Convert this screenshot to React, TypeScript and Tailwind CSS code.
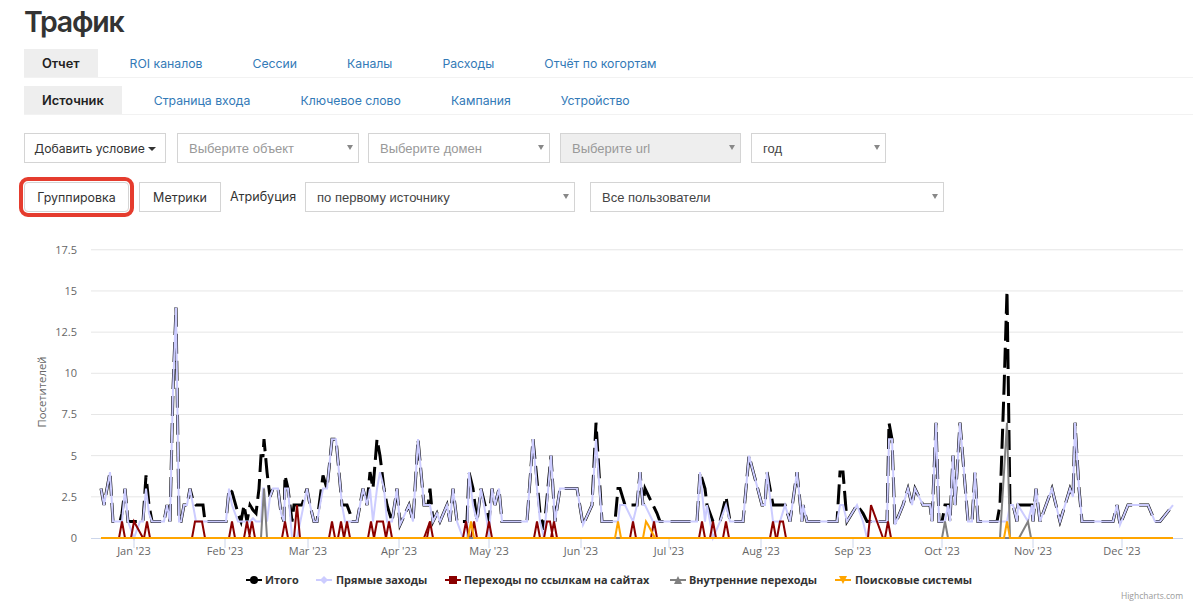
import type { ReactNode } from "react";

const UI_FONT = "font-['Inter','Liberation_Sans',sans-serif]";
const SELECT_FONT = "font-['Liberation_Sans',Arial,sans-serif]";

// [x px, direct, total] - total falls back to direct
type P = [number, number, number?];

const traffic: P[] = [
  [101, 3], [104, 2], [107, 3], [110, 4], [113, 1], [120, 1], [122, 1, 1.5], [125, 3], [128, 1], [134, 0, 1], [140, 1],
  [143, 1], [146, 3, 3.8], [149, 1.5, 2], [152, 1], [164, 1], [167, 2], [170, 1], [173, 9], [176, 14], [179, 1],
  [181, 1], [184, 2], [187, 2], [190, 3], [193, 2, 2.3], [196, 1, 2], [203, 1, 2], [205, 1, 1], [226, 1], [229, 3],
  [232, 2, 2.8], [238, 1, 1.5], [241, 1], [244, 1, 2], [247, 1], [250, 1, 2], [253, 1.2, 1.7], [256, 1, 1.5], [259, 1, 3],
  [261, 1, 5], [263, 3, 5], [264, 3, 6], [267, 1, 4], [270, 2.5], [273, 3], [278, 3], [281, 1.5], [284, 1], [285, 3, 3.8],
  [288, 3], [292, 0, 1], [294, 0, 2], [297, 0, 2], [302, 1.5, 2], [307, 3], [310, 2], [314, 1], [317, 1], [323, 3, 3.8],
  [327, 3], [332, 6], [336, 6], [342, 2], [345, 1, 2], [347, 1, 2], [350, 1, 1.5], [352, 1], [357, 1], [363, 3],
  [367, 2], [370, 3, 4], [373, 1, 3], [377, 3, 6], [380, 4, 5], [384, 3, 3], [387, 1, 2], [392, 1], [397, 3], [400, 0.8],
  [409, 2], [413, 1], [418, 6], [424, 2], [428, 2], [430, 2, 3], [433, 1], [437, 1.5], [440, 1], [447, 2], [450, 1],
  [453, 3], [457, 1], [463, 0, 1], [467, 0, 1], [469, 4], [473, 2, 3], [477, 1, 1], [481, 3], [487, 1, 1.5], [489, 0, 1], [492, 3],
  [495, 2], [499, 3], [502, 1], [527, 1], [533, 6], [537, 3, 3.5], [540, 1, 1.5], [544, 0, 0.5], [551, 5], [555, 1], [560, 3], [577, 3],
  [583, 0.8], [592, 2], [596, 6, 7], [602, 1], [615, 1], [618, 1, 3], [620, 2, 3], [625, 2], [633, 1, 2], [637, 2], [640, 4],
  [643, 2], [645, 2, 3], [653, 1, 2], [657, 1, 1.5], [660, 1], [697, 1], [700, 4], [705, 1, 3], [707, 2], [713, 0, 1],
  [720, 1], [726, 2, 2.5], [730, 1], [743, 1], [749, 5], [762, 2], [765, 2], [767, 4], [773, 1, 2], [777, 1, 2],
  [780, 1, 2], [785, 2], [790, 1], [797, 4], [802, 1], [803, 2], [807, 1], [837, 1], [840, 2, 4], [843, 2, 4], [847, 1], [857, 2],
  [863, 1, 1.5], [867, 0, 1], [870, 1, 1], [873, 1], [887, 1], [889, 6, 7], [892, 6], [895, 0.8], [903, 2], [908, 3], [912, 2],
  [915, 3], [923, 2], [930, 2], [932, 1], [936, 7], [939, 1], [942, 1], [945, 1, 2], [948, 2], [950, 1], [953, 5], [955, 2],
  [960, 7], [968, 1], [972, 1], [975, 4], [978, 1], [997, 1], [1000, 1, 2], [1004, 1, 9], [1007, 1, 15], [1010, 2], [1013, 2],
  [1017, 1], [1018, 2], [1028, 1, 2], [1032, 2], [1033, 1], [1036, 3], [1040, 1], [1052, 3], [1060, 1], [1070, 3], [1073, 2.5],
  [1075, 7], [1079, 3], [1082, 1], [1113, 1], [1117, 2], [1120, 0.8], [1128, 2], [1148, 2], [1155, 1], [1160, 1], [1173, 2],
];

const y = (v: number) => 538 - v * 16.47;

const toLine = (pts: number[][]) => pts.map(([px, v]) => `${px},${y(v)}`).join(" ");

// "x,v x,v" -> svg points
const parseLine = (l: string) => toLine(l.split(" ").map((s) => s.split(",").map(Number)));

// builds a baseline series with spikes: [x, value]
function spikes(items: [number, number][]) {
  const pts: number[][] = [[101, 0]];
  for (const [px, v] of items) {
    pts.push([px - 3, 0], [px, v], [px + 3, 0]);
  }
  pts.push([1173, 0]);
  return toLine(pts);
}

const referral = spikes([
  [122, 1], [147, 1], [232, 1], [247, 1], [252, 1], [285, 1], [297, 2], [332, 1], [341, 1], [347, 1], [371, 1], [389, 1], [430, 1],
  [466, 1], [474, 1], [489, 1], [537, 1], [554, 1], [633, 1], [654, 1], [702, 1], [713, 1], [726, 1], [773, 1], [888, 1],
]);
const referralExtra = ["131,0 134,1 143,0", "192,0 195,1 202,1 205,0", "374,0 377,1 383,1 386,0", "544,0 547,1 550,1 553,0", "777,0 780,1 783,1 786,0", "868,0 871,2 883,0", "424,0 430,1"];
const internal = spikes([[264, 3], [945, 1]]);
const internalExtra = ["1000,0 1007,7 1010,0", "1019,0 1028,1 1031,0"];
const search = spikes([[471, 1], [618, 1], [1007, 1]]);
const searchExtra = "643,0 646,1 648,0.8 655,0";

const yTicks = ["0", "2.5", "5", "7.5", "10", "12.5", "15", "17.5"];
const months: [string, number][] = [
  ["Jan '23", 134], ["Feb '23", 225], ["Mar '23", 308], ["Apr '23", 399], ["May '23", 489], ["Jun '23", 581],
  ["Jul '23", 669], ["Aug '23", 761], ["Sep '23", 853], ["Oct '23", 942], ["Nov '23", 1033], ["Dec '23", 1122],
];

function TrafficChart() {
  const chartFont = "'Open Sans', sans-serif";
  return (
    <svg viewBox="0 227 1200 380" className="block w-[1200px] h-[380px]" fontFamily={chartFont}>
      {yTicks.slice(1).map((t, i) => (
        <line key={t} x1={91} x2={1183} y1={y((i + 1) * 2.5)} y2={y((i + 1) * 2.5)} stroke="#e6e6e6" />
      ))}
      <line x1={91} x2={1183} y1={538.5} y2={538.5} stroke="#ccd6eb" />
      {months.map(([m, x]) => (
        <g key={m}>
          <line x1={x} x2={x} y1={538} y2={548} stroke="#ccd6eb" />
          <text x={x} y={555} textAnchor="middle" fontSize={11} fill="#666">{m}</text>
        </g>
      ))}
      {yTicks.map((t, i) => (
        <text key={t} x={77} y={y(i * 2.5) + 4} textAnchor="end" fontSize={11} fill="#666">{t}</text>
      ))}
      <text transform="translate(46 392) rotate(-90)" textAnchor="middle" fontSize={11.3} fill="#666">Посетителей</text>

      <polyline points={toLine(traffic.map(([px, d, t]) => [px, t ?? d]))} fill="none" stroke="#000" strokeWidth={3} strokeDasharray="20 7" />
      <polyline points={toLine(traffic.map(([px, d]) => [px, d]))} fill="none" stroke="#ccccff" strokeWidth={2} />
      <polyline points={referral} fill="none" stroke="#8b0000" strokeWidth={2} />
      {referralExtra.map((l) => (
        <polyline key={l} points={parseLine(l)} fill="none" stroke="#8b0000" strokeWidth={2} />
      ))}
      <polyline points={internal} fill="none" stroke="#808080" strokeWidth={2} />
      {internalExtra.map((l) => (
        <polyline key={l} points={parseLine(l)} fill="none" stroke="#808080" strokeWidth={2} />
      ))}
      <polyline points={search} fill="none" stroke="#ffa500" strokeWidth={2} />
      <polyline points={parseLine(searchExtra)} fill="none" stroke="#ffa500" strokeWidth={2} />

      <g fontSize={10.9} fontWeight={700} fill="#333">
        <line x1={246} x2={262} y1={580} y2={580} stroke="#000" strokeWidth={2} />
        <circle cx={254} cy={580} r={4} fill="#000" />
        <text x={265} y={584}>Итого</text>

        <line x1={316} x2={332} y1={580} y2={580} stroke="#ccccff" strokeWidth={2} />
        <path d="M324 576 L328 580 L324 584 L320 580 Z" fill="#ccccff" />
        <text x={336} y={584}>Прямые заходы</text>

        <line x1={445} x2={461} y1={580} y2={580} stroke="#8b0000" strokeWidth={2} />
        <rect x={449} y={576} width={8} height={8} fill="#8b0000" />
        <text x={464} y={584}>Переходы по ссылкам на сайтах</text>

        <line x1={670} x2={686} y1={580} y2={580} stroke="#808080" strokeWidth={2} />
        <path d="M678 576 L682 584 L674 584 Z" fill="#808080" />
        <text x={689} y={584}>Внутренние переходы</text>

        <line x1={835} x2={851} y1={580} y2={580} stroke="#ffa500" strokeWidth={2} />
        <path d="M839 576 L847 576 L843 584 Z" fill="#ffa500" />
        <text x={855} y={584}>Поисковые системы</text>
      </g>
      <text x={1183} y={599} textAnchor="end" fontSize={8.5} fill="#999">Highcharts.com</text>
    </svg>
  );
}

function Tabs({ items }: { items: string[] }) {
  return (
    <div className="flex gap-[14px] h-[29px] border-b border-[#f2f2f2] w-[1169px]">
      {items.map((item, i) =>
        i === 0 ? (
          <span key={item} className="h-[28px] px-[18px] bg-[#eeeeee] text-[12.8px] leading-[29px] font-semibold text-[#222]">
            {item}
          </span>
        ) : (
          <span key={item} className="h-[28px] px-[18px] text-[12.25px] leading-[29px] text-[#337ab7]">
            {item}
          </span>
        ),
      )}
    </div>
  );
}

function FakeSelect({ label, width, muted, disabled }: { label: string; width: string; muted?: boolean; disabled?: boolean }) {
  return (
    <div
      className={`${width} h-[30px] pl-[11px] pr-[5px] pt-[1px] flex items-center justify-between border border-[#d4d4d4] text-[13px] ${SELECT_FONT} ${
        disabled ? "bg-[#eeeeee] text-[#999]" : "bg-white"
      } ${muted ? "text-[#999]" : "text-[#444]"}`}
    >
      <span>{label}</span>
      <span className="-mt-[3px] w-0 h-0 border-x-[3px] border-x-transparent border-t-[5px] border-t-[#888]" />
    </div>
  );
}

function PlainButton({ children, className }: { children: ReactNode; className: string }) {
  return (
    <div className={`h-[30px] pt-[2px] flex items-center justify-center bg-white border border-[#d4d4d4] text-[#333] ${className}`}>
      {children}
    </div>
  );
}

export default function App() {
  return (
    <div className={`w-[1200px] h-[607px] overflow-hidden bg-white pl-[24px] ${UI_FONT}`}>
      <h1 className="h-[44px] mb-[5px] text-[28.5px] tracking-[-1.2px] leading-[44px] font-semibold text-[#333]">Трафик</h1>
      <Tabs items={["Отчет", "ROI каналов", "Сессии", "Каналы", "Расходы", "Отчёт по когортам"]} />
      <div className="mt-[8px]">
        <Tabs items={["Источник", "Страница входа", "Ключевое слово", "Кампания", "Устройство"]} />
      </div>

      <div className="mt-[18px] flex">
        <PlainButton className="w-[142px] gap-[3px] text-[12.2px]">
          Добавить условие
          <span className="w-0 h-0 border-x-[4px] border-x-transparent border-t-[4px] border-t-[#333]" />
        </PlainButton>
        <div className="ml-[11px]"><FakeSelect label="Выберите объект" width="w-[182px]" muted /></div>
        <div className="ml-[9px]"><FakeSelect label="Выберите домен" width="w-[182px]" muted /></div>
        <div className="ml-[10px]"><FakeSelect label="Выберите url" width="w-[181px]" muted disabled /></div>
        <div className="ml-[10px]"><FakeSelect label="год" width="w-[135px]" /></div>
      </div>

      <div className="mt-[19px] flex items-center">
        <PlainButton className="w-[105px] text-[12.4px] rounded-[4px] outline-[4px] outline-offset-[1px] outline-[#e53c2e] [outline-style:solid]">Группировка</PlainButton>
        <PlainButton className="w-[82px] ml-[10px] text-[12.5px]">Метрики</PlainButton>
        <span className="w-[66px] ml-[9px] text-[12.6px] whitespace-nowrap text-[#333]">Атрибуция</span>
        <div className="ml-[9px]"><FakeSelect label="по первому источнику" width="w-[270px]" /></div>
        <div className="ml-[15px]"><FakeSelect label="Все пользователи" width="w-[354px]" /></div>
      </div>

      <div className="mt-[15px] -ml-[24px]">
        <TrafficChart />
      </div>
    </div>
  );
}
